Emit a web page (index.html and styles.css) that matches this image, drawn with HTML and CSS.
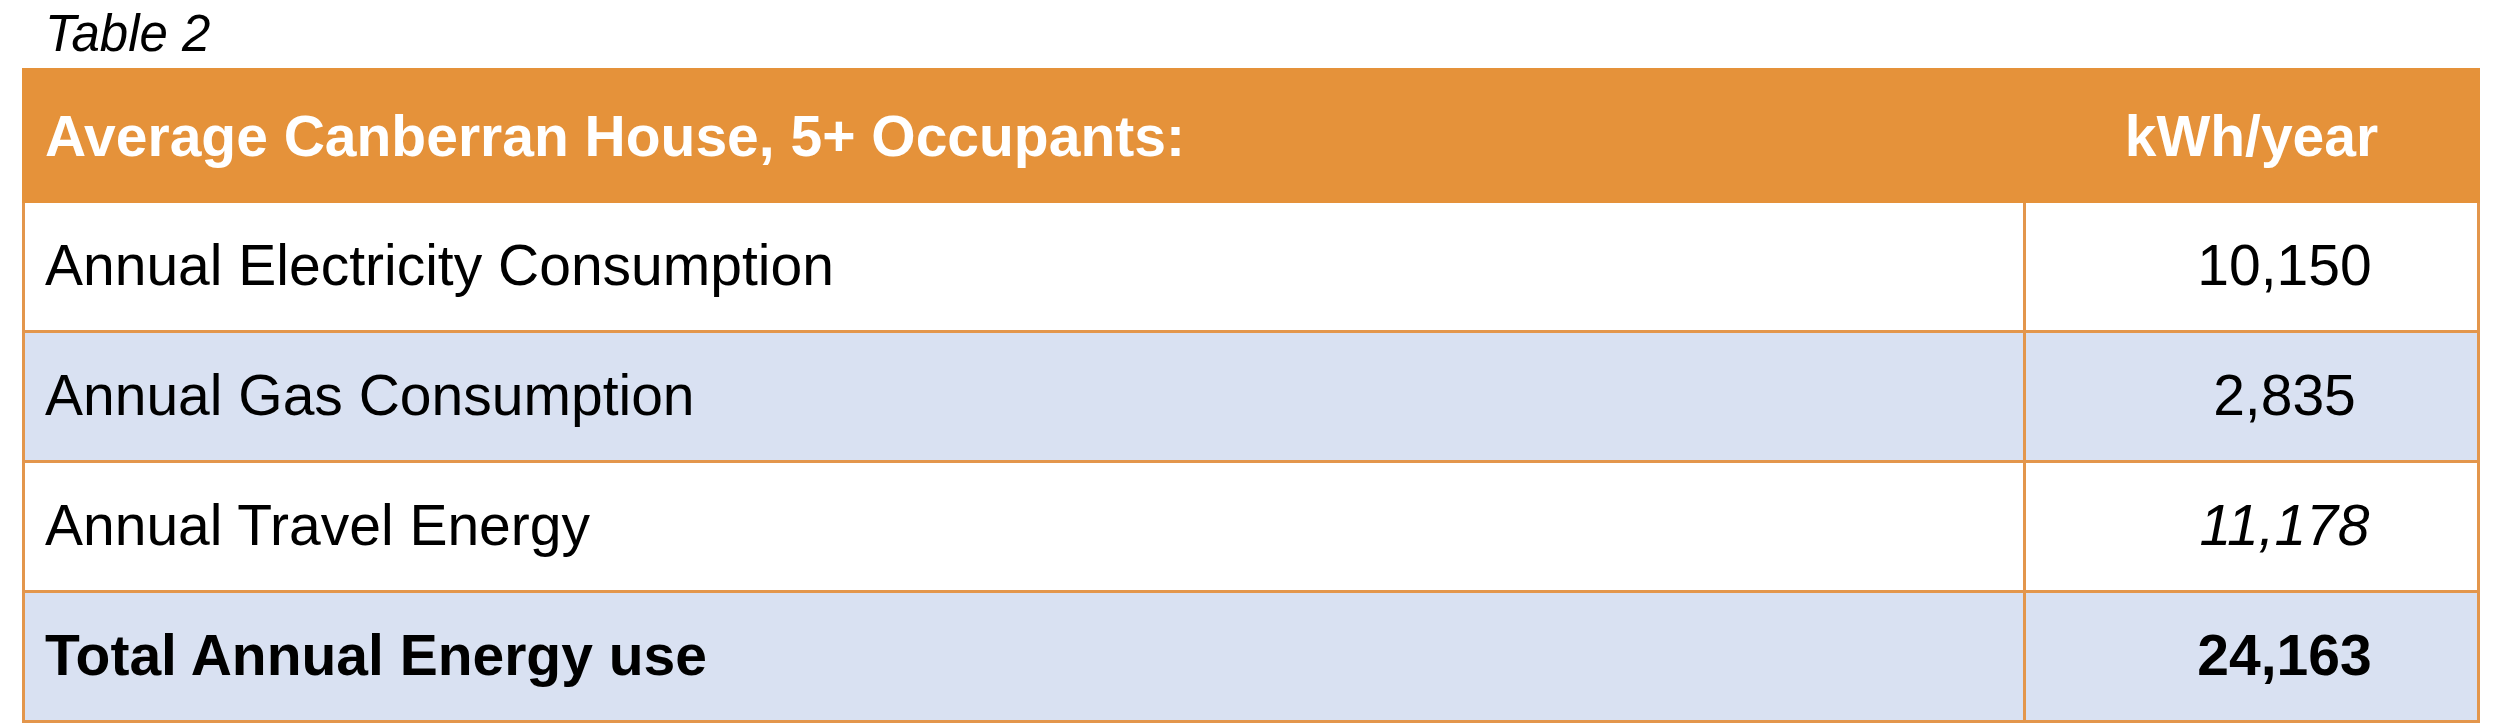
FILE: index.html
```html
<!DOCTYPE html>
<html lang="en">
<head>
<meta charset="utf-8">
<title>Table 2</title>
<link rel="stylesheet" href="styles.css">
</head>
<body>
<div class="page">
  <p class="caption">Table 2</p>
  <table class="energy">
    <colgroup>
      <col class="col-label">
      <col class="col-value">
    </colgroup>
    <thead>
      <tr class="head-row">
        <th class="label">Average Canberran House, 5+ Occupants:</th>
        <th class="unit">kWh/year</th>
      </tr>
    </thead>
    <tbody>
      <tr class="row-white">
        <td class="label">Annual Electricity Consumption</td>
        <td class="value">10,150</td>
      </tr>
      <tr class="row-blue">
        <td class="label">Annual Gas Consumption</td>
        <td class="value">2,835</td>
      </tr>
      <tr class="row-white">
        <td class="label">Annual Travel Energy</td>
        <td class="value italic">11,178</td>
      </tr>
      <tr class="row-blue total">
        <td class="label">Total Annual Energy use</td>
        <td class="value">24,163</td>
      </tr>
    </tbody>
  </table>
</div>
</body>
</html>
```
FILE: styles.css
```css
html, body {
  margin: 0;
  padding: 0;
  background: #ffffff;
}

body {
  font-family: "Liberation Sans", Arial, sans-serif;
  color: #000000;
  width: 2500px;
  height: 728px;
  overflow: hidden;
}

.page {
  padding: 0 0 0 22px;
}

.caption {
  margin: 0 0 4px 23px;
  padding-top: 4px;
  font-size: 51px;
  line-height: 60px;
  font-style: italic;
  height: 60px;
}

.energy {
  border-collapse: collapse;
  width: 2455px;
  table-layout: fixed;
}

.col-label {
  width: 2001px;
}

.col-value {
  width: 454px;
}

.head-row {
  height: 132px;
  background: #e5923a;
}

.head-row th {
  border: 3px solid #e5923a;
  color: #ffffff;
  font-weight: bold;
  font-size: 57px;
  vertical-align: middle;
  padding: 0;
}

.head-row th.label {
  text-align: left;
  padding-left: 20px;
}

.head-row th.unit {
  text-align: center;
}

tbody tr {
  height: 130px;
}

tbody td {
  border: 3px solid #e3964c;
  font-size: 57px;
  vertical-align: middle;
  padding: 0 0 4px 0;
}

tbody td.label {
  text-align: left;
  padding-left: 20px;
}

tbody td.value {
  text-align: center;
  padding-left: 66px;
}

.row-white {
  background: #ffffff;
}

.row-blue {
  background: #d9e1f2;
}

.italic {
  font-style: italic;
}

.total td {
  font-weight: bold;
}
```
